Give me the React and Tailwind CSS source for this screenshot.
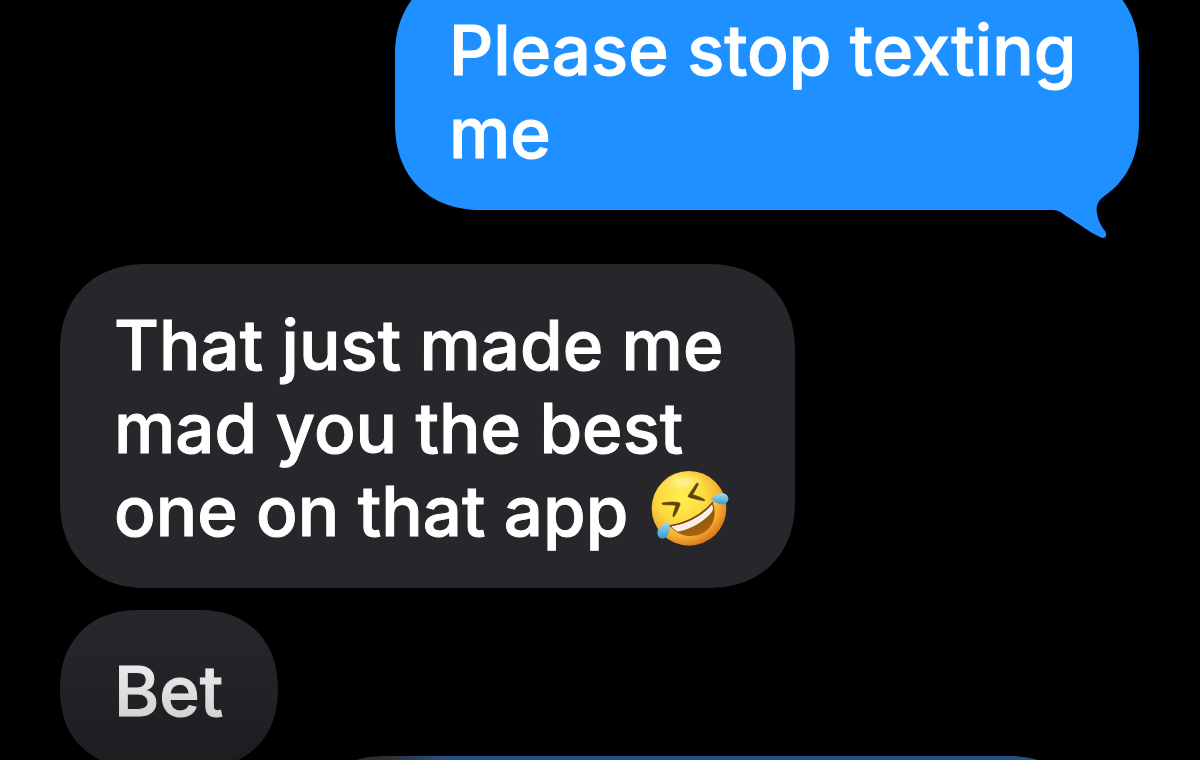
const MESSAGES = [
  { id: 1, from: "me", text: "Please stop texting me", tail: true },
  { id: 2, from: "them", text: "That just made me mad you the best one on that app", emoji: true },
  { id: 3, from: "them", text: "Bet" },
];

const ROW_STYLES = {
  1: "justify-end",
  2: "justify-start mt-[54px]",
  3: "justify-start mt-[22px]",
};

const BUBBLE_STYLES = {
  me: "bg-[#1e90ff] max-w-[744px]",
  them: "bg-[#27262b] max-w-[735px]",
};

function Tail() {
  return (
    <svg
      className="absolute right-5 -bottom-[30px] w-20 h-[60px]"
      viewBox="0 0 80 60"
      fill="#1e90ff"
      aria-hidden="true"
    >
      <path d="M0 0H83C80 3 77 5 74 8C70 11 66 14 64 17C58 22 57 28 58 33C59 41 63 47 66 51C69 56 66 60 61 57C52 53 40 44 27 36C22 32 19 30 14 30H0Z" />
    </svg>
  );
}

function RoflEmoji() {
  return (
    <svg
      className="inline-block w-[78px] h-[78px] ml-1 align-[-12px]"
      viewBox="36 28 234 234"
      role="img"
      aria-label="Rolling on the floor laughing"
    >
      <defs>
        <radialGradient id="face" cx="0.4" cy="0.36" r="0.66">
          <stop offset="0" stopColor="#fff04f" />
          <stop offset="0.5" stopColor="#fbd93f" />
          <stop offset="0.8" stopColor="#f3ac33" />
          <stop offset="1" stopColor="#d9781a" />
        </radialGradient>
        <radialGradient id="shine" cx="0.5" cy="0.5" r="0.5">
          <stop offset="0" stopColor="#fffbd0" stopOpacity="0.7" />
          <stop offset="1" stopColor="#fff6a0" stopOpacity="0" />
        </radialGradient>
        <linearGradient id="mouth" x1="0" y1="0" x2="0.5" y2="1">
          <stop offset="0" stopColor="#6b3a08" />
          <stop offset="1" stopColor="#a8640f" />
        </linearGradient>
        <linearGradient id="tear" x1="0" y1="0" x2="0" y2="1">
          <stop offset="0" stopColor="#a5dcee" />
          <stop offset="1" stopColor="#3b9bcf" />
        </linearGradient>
      </defs>
      <circle cx="150" cy="143" r="112" fill="url(#face)" />
      <ellipse cx="132" cy="64" rx="62" ry="30" fill="url(#shine)" />
      {/* eyes */}
      <g fill="#5f430c" stroke="#5f430c" strokeWidth="2" strokeLinejoin="round">
        <path d="M176 67C178 69 178 72 176 75L161 102C174 106 187 110 197 117C198 119 197 120 194 120C178 117 163 114 149 109C147 108 147 106 149 103C158 90 166 78 173 68Z" />
        <path d="M69 129C70 126 73 126 77 126C92 124 107 123 120 126C124 127 124 130 122 134C118 146 112 158 105 168C102 169 101 167 102 163C104 154 107 144 111 134C97 132 84 132 72 132Z" />
      </g>
      {/* mouth */}
      <path
        d="M92 196C140 187 188 165 221 125C230 150 230 180 210 203C180 236 124 234 92 196Z"
        fill="url(#mouth)"
      />
      <path d="M97 197C143 190 190 167 219 131C223 141 223 148 218 155C193 185 153 208 115 213C107 208 102 204 97 197Z" fill="#fbeee4" />
      <path d="M92 196C140 187 188 165 221 125" fill="none" stroke="#754309" strokeWidth="4" strokeLinecap="round" />
      {/* tears */}
      <path d="M216 117C222 107 238 97 253 98C264 100 271 110 267 120C262 131 249 134 239 129C230 125 224 120 216 117Z" fill="url(#tear)" />
      <path d="M88 182C93 195 93 214 85 226C77 237 62 236 57 225C52 212 58 201 68 195C76 190 82 187 88 182Z" fill="url(#tear)" />
    </svg>
  );
}

function Bubble({ message }) {
  return (
    <div
      className={`relative pl-[54px] pr-[55px] pt-10 pb-[35px] rounded-[87px] [corner-shape:superellipse(1.15)] ${BUBBLE_STYLES[message.from]}`}
    >
      <p className="text-white text-[69px] leading-[83px] font-medium [-webkit-text-stroke:1px_white]">
        {message.text}
        {message.emoji && <> <RoflEmoji /></>}
      </p>
      {message.tail && <Tail />}
    </div>
  );
}

export default function App() {
  return (
    <main className="relative h-screen overflow-hidden bg-black font-['Inter',sans-serif]">
      {/* Thread, scrolled so the first bubble runs off the top */}
      <div className="-mt-[31px] pl-[60px] pr-[61px]">
        {MESSAGES.map((message) => (
          <div key={message.id} className={`flex ${ROW_STYLES[message.id]}`}>
            <Bubble message={message} />
          </div>
        ))}
        <div className="-mt-3 mr-[51px] flex justify-end">
          <div className="w-[782px] h-[158px] rounded-[87px] [corner-shape:superellipse(1.15)] bg-linear-to-r from-[#3c3c3e] from-10% to-[#3069b5] to-18%" />
        </div>
      </div>

      {/* Fade towards the bottom edge */}
      <div className="absolute inset-x-0 bottom-0 h-[140px] bg-linear-to-b from-transparent to-black/25" />
    </main>
  );
}
